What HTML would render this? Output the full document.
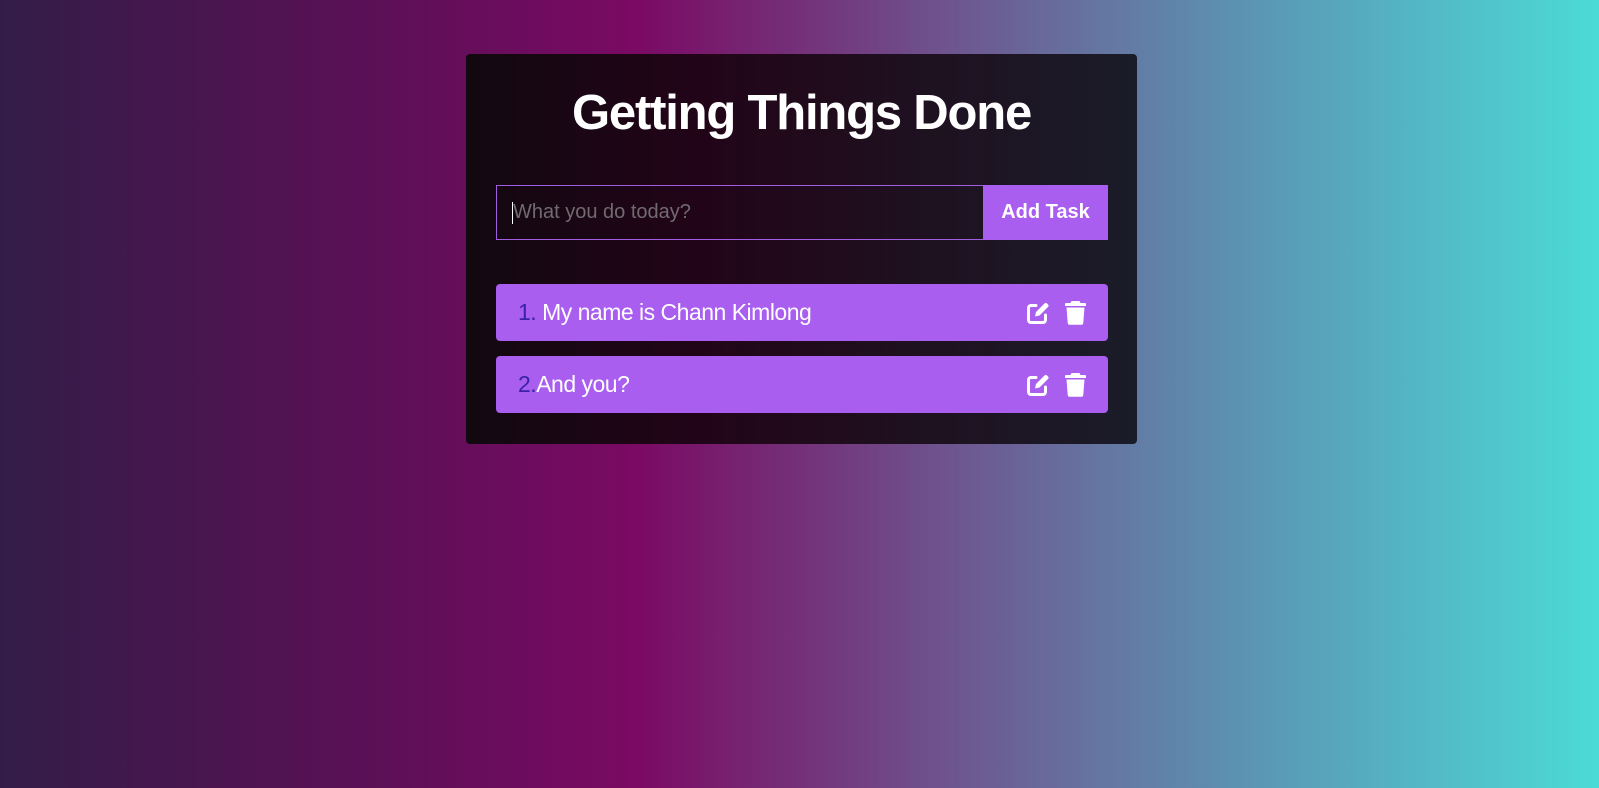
<!DOCTYPE html>
<html><head><meta charset="utf-8"><style>
html,body{margin:0;height:100%;}
body{width:1599px;height:788px;background:linear-gradient(90deg,#331d48 0%,#5e0f57 25%,#7b0a64 40%,#6d5790 60%,#5a9bb6 80%,#4bdbd6 100%);font-family:"Liberation Sans",sans-serif;position:relative;overflow:hidden;}
.card{position:absolute;left:466px;top:54px;width:671px;height:390px;border-radius:4px;background:linear-gradient(90deg,#120810 0%,#220418 35%,#1f0e1e 60%,#1b1c29 100%);}
h1{position:absolute;left:0;right:0;top:31px;margin:0;text-align:center;color:#fff;font-size:49px;font-weight:bold;letter-spacing:-1.2px;}
.inp{position:absolute;left:30px;top:131px;width:487px;height:55px;border:1px solid #a25ee0;border-right:none;box-sizing:border-box;}
.inp span{position:absolute;left:16px;top:15px;color:#716b70;font-size:20px;}
.inp i{position:absolute;left:15px;top:16px;width:1px;height:22px;background:#fff;}
.btn{position:absolute;left:517px;top:131px;width:125px;height:55px;background:#a95ef0;color:#fff;font-weight:bold;font-size:20px;display:flex;align-items:center;justify-content:center;}
.item{position:absolute;left:30px;width:612px;height:57px;border-radius:4px;background:#a95ef0;color:#fff;font-size:23px;letter-spacing:-0.5px;}
.item .t{position:absolute;left:22px;top:15px;}
.item b{font-weight:normal;color:#3a22a8;}
.ic{position:absolute;top:17px;}
</style></head><body>
<div class="card">
<h1>Getting Things Done</h1>
<div class="inp"><i></i><span>What you do today?</span></div>
<div class="btn">Add Task</div>
<div class="item" style="top:230px"><div class="t"><b>1.</b> My name is Chann Kimlong</div>
<svg class="ic" style="left:530px" width="24" height="24" viewBox="0 0 24 24"><path d="M10 4.5H5a2.5 2.5 0 0 0-2.5 2.5v12A2.5 2.5 0 0 0 5 21.5h12a2.5 2.5 0 0 0 2.5-2.5v-5" fill="none" stroke="#fff" stroke-width="3" stroke-linecap="round"/><path d="M9 15.5l1-4.5L18.5 2.5a1.8 1.8 0 0 1 2.5 0l1 1a1.8 1.8 0 0 1 0 2.5L13.5 14.5z" fill="#fff"/></svg>
<svg class="ic" style="left:569px" width="21" height="24" viewBox="0 0 21 24"><path d="M6.5 0h8l1 2H20a1 1 0 0 1 1 1v2H0V3a1 1 0 0 1 1-1h4.5z" fill="#fff"/><path d="M1.5 6.5h18l-1.2 15.2a2.2 2.2 0 0 1-2.2 2.1H4.9a2.2 2.2 0 0 1-2.2-2.1z" fill="#fff"/></svg></div>
<div class="item" style="top:302px"><div class="t"><b>2.</b>And you?</div>
<svg class="ic" style="left:530px" width="24" height="24" viewBox="0 0 24 24"><path d="M10 4.5H5a2.5 2.5 0 0 0-2.5 2.5v12A2.5 2.5 0 0 0 5 21.5h12a2.5 2.5 0 0 0 2.5-2.5v-5" fill="none" stroke="#fff" stroke-width="3" stroke-linecap="round"/><path d="M9 15.5l1-4.5L18.5 2.5a1.8 1.8 0 0 1 2.5 0l1 1a1.8 1.8 0 0 1 0 2.5L13.5 14.5z" fill="#fff"/></svg>
<svg class="ic" style="left:569px" width="21" height="24" viewBox="0 0 21 24"><path d="M6.5 0h8l1 2H20a1 1 0 0 1 1 1v2H0V3a1 1 0 0 1 1-1h4.5z" fill="#fff"/><path d="M1.5 6.5h18l-1.2 15.2a2.2 2.2 0 0 1-2.2 2.1H4.9a2.2 2.2 0 0 1-2.2-2.1z" fill="#fff"/></svg></div>
</div>
</body></html>
